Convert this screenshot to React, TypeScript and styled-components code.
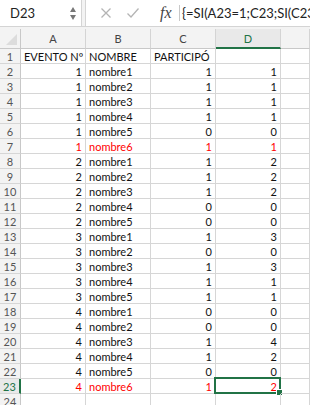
import React from 'react';
import styled, { createGlobalStyle, css } from 'styled-components';

const GlobalStyle = createGlobalStyle`
  html, body {
    margin: 0;
    padding: 0;
    background: #ffffff;
    overflow: hidden;
  }
  body {
    font-family: Lato, "Liberation Sans", sans-serif;
  }
`;

const green = '#217346';
const gridLine = '#d6d6d6';

const Window = styled.div`
  width: 310px;
  height: 405px;
  overflow: hidden;
  background: #ffffff;
`;

const FormulaBar = styled.div`
  height: 26px;
  display: flex;
  align-items: center;
  border-bottom: 1px solid #d4d4d4;
  background: #ffffff;
`;

const NameBox = styled.div`
  width: 82px;
  height: 26px;
  display: flex;
  align-items: center;
  justify-content: space-between;
  padding: 0 5px 0 10px;
  box-sizing: border-box;
  border-right: 1px solid #d4d4d4;
  font-size: 13px;
  color: #222;
`;

const Spinner = styled.div`
  display: flex;
  flex-direction: column;
  gap: 3px;
`;

const Arrow = styled.span<{ $down?: boolean }>`
  width: 0;
  height: 0;
  border-left: 3.5px solid transparent;
  border-right: 3.5px solid transparent;
  ${(p) =>
    p.$down
      ? css`border-top: 5px solid #777;`
      : css`border-bottom: 5px solid #777;`}
`;

const Gap = styled.div`
  width: 3px;
  height: 26px;
  background: #f3f3f3;
  border-right: 1px solid #d4d4d4;
`;

const Actions = styled.div`
  display: flex;
  align-items: center;
  gap: 14px;
  padding-left: 14px;
  width: 93px;
  box-sizing: border-box;
`;

const Fx = styled.span`
  font-family: "Liberation Serif", "DejaVu Serif", serif;
  font-style: italic;
  font-size: 16px;
  color: #444;
  margin-left: 6px;
`;

const Formula = styled.div`
  flex: 1;
  height: 16px;
  display: flex;
  align-items: center;
  border-left: 1px solid #c8c8c8;
  padding-left: 2px;
  font-size: 13px;
  color: #222;
  white-space: nowrap;
  overflow: hidden;
`;

const Strip = styled.div`
  height: 2px;
  background: #f3f3f3;
`;

const Sheet = styled.div`
  display: grid;
  grid-template-columns: 21px 65px 65px 65px 65px 1fr;
  grid-auto-rows: 15px;
  grid-template-rows: 20px;
`;

const Corner = styled.div`
  position: relative;
  background: #f3f3f3;
  border-right: 1px solid #c8c8c8;
  border-bottom: 1px solid #c8c8c8;
  &::after {
    content: '';
    position: absolute;
    right: 3px;
    bottom: 3px;
    width: 0;
    height: 0;
    border-left: 11px solid transparent;
    border-bottom: 11px solid #dcdcdc;
  }
`;

const ColHead = styled.div<{ $active?: boolean }>`
  background: ${(p) => (p.$active ? '#e9e9e9' : '#f3f3f3')};
  border-right: 1px solid #d4d4d4;
  border-bottom: ${(p) => (p.$active ? `2px solid ${green}` : '1px solid #c8c8c8')};
  color: ${(p) => (p.$active ? green : '#444')};
  font-size: 11px;
  display: flex;
  align-items: center;
  justify-content: center;
`;

const RowHead = styled.div<{ $active?: boolean }>`
  background: ${(p) => (p.$active ? '#e9e9e9' : '#f3f3f3')};
  border-right: ${(p) => (p.$active ? `2px solid ${green}` : '1px solid #c8c8c8')};
  border-bottom: 1px solid ${gridLine};
  color: ${(p) => (p.$active ? green : '#555')};
  font-size: 11px;
  display: flex;
  align-items: center;
  justify-content: center;
  box-sizing: border-box;
`;

const Cell = styled.div<{ $num?: boolean; $red?: boolean; $selected?: boolean }>`
  position: relative;
  border-right: 1px solid ${gridLine};
  border-bottom: 1px solid ${gridLine};
  font-size: 11px;
  color: ${(p) => (p.$red ? '#ff0000' : '#111')};
  display: flex;
  align-items: center;
  justify-content: ${(p) => (p.$num ? 'flex-end' : 'flex-start')};
  padding: 0 3px;
  white-space: nowrap;
  overflow: visible;
  box-sizing: border-box;
  ${(p) =>
    p.$selected &&
    css`
      &::before {
        content: '';
        position: absolute;
        left: -2px;
        top: -2px;
        right: -1px;
        bottom: -1px;
        border: 2px solid ${green};
      }
      &::after {
        content: '';
        position: absolute;
        right: -3px;
        bottom: -3px;
        width: 5px;
        height: 5px;
        background: ${green};
        border: 1px solid #fff;
      }
    `}
`;

const rows: [number, number, number, number][] = [
  [1, 1, 1, 1],
  [1, 2, 1, 1],
  [1, 3, 1, 1],
  [1, 4, 1, 1],
  [1, 5, 0, 0],
  [1, 6, 1, 1],
  [2, 1, 1, 2],
  [2, 2, 1, 2],
  [2, 3, 1, 2],
  [2, 4, 0, 0],
  [2, 5, 0, 0],
  [3, 1, 1, 3],
  [3, 2, 0, 0],
  [3, 3, 1, 3],
  [3, 4, 1, 1],
  [3, 5, 1, 1],
  [4, 1, 0, 0],
  [4, 2, 0, 0],
  [4, 3, 1, 4],
  [4, 4, 1, 2],
  [4, 5, 0, 0],
  [4, 6, 1, 2],
];

const Cross = () => (
  <svg width="12" height="12" viewBox="0 0 12 12">
    <path d="M1.5 1.5 L10.5 10.5 M10.5 1.5 L1.5 10.5" stroke="#b4b4b4" strokeWidth="1.3" fill="none" />
  </svg>
);

const Check = () => (
  <svg width="14" height="12" viewBox="0 0 14 12">
    <path d="M1.5 6.5 L5 10 L12.5 1.5" stroke="#b4b4b4" strokeWidth="1.3" fill="none" />
  </svg>
);

function App() {
  return (
    <Window>
      <GlobalStyle />
      <FormulaBar>
        <NameBox>
          D23
          <Spinner>
            <Arrow />
            <Arrow $down />
          </Spinner>
        </NameBox>
        <Gap />
        <Actions>
          <Cross />
          <Check />
          <Fx>fx</Fx>
        </Actions>
        <Formula>{'{=SI(A23=1;C23;SI(C23=0;0;C23+D22))}'}</Formula>
      </FormulaBar>
      <Strip />
      <Sheet>
        <Corner />
        <ColHead>A</ColHead>
        <ColHead>B</ColHead>
        <ColHead>C</ColHead>
        <ColHead $active>D</ColHead>
        <ColHead />

        <RowHead>1</RowHead>
        <Cell>EVENTO Nº</Cell>
        <Cell>NOMBRE</Cell>
        <Cell>PARTICIPÓ</Cell>
        <Cell />
        <Cell />

        {rows.map(([ev, n, part, d], i) => {
          const rowNo = i + 2;
          const red = n === 6;
          const active = rowNo === 23;
          return (
            <React.Fragment key={rowNo}>
              <RowHead $active={active}>{rowNo}</RowHead>
              <Cell $num $red={red}>{ev}</Cell>
              <Cell $red={red}>nombre{n}</Cell>
              <Cell $num $red={red}>{part}</Cell>
              <Cell $num $red={red} $selected={active}>{d}</Cell>
              <Cell />
            </React.Fragment>
          );
        })}

        <RowHead>24</RowHead>
        <Cell />
        <Cell />
        <Cell />
        <Cell />
        <Cell />
      </Sheet>
    </Window>
  );
}

export default App;
